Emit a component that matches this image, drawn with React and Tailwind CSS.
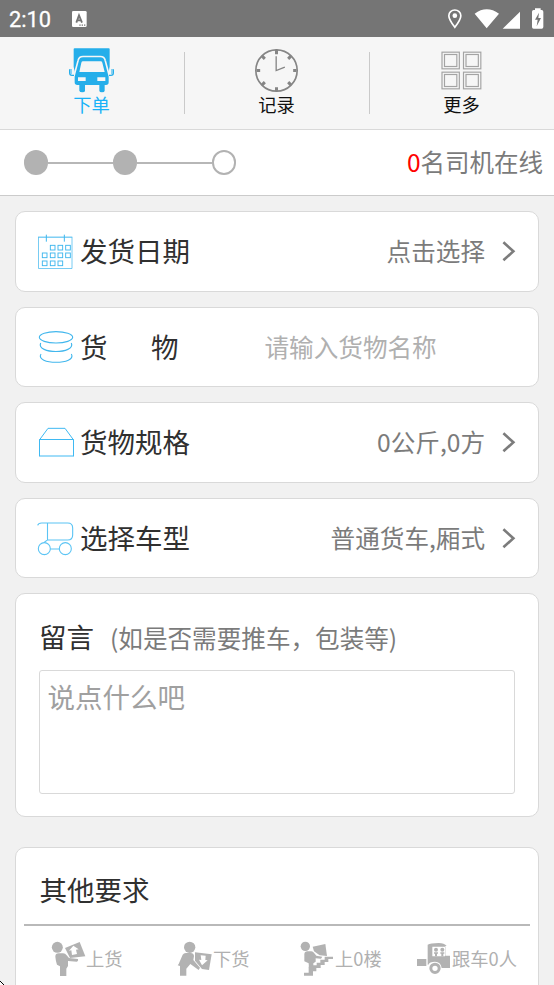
import React from "react";

const TruckIcon = () => (
  <svg className="h-[47px] w-[47px]" viewBox="204 141 141 141">
    <path fill="#25aeea" d="M221 147q0-2 3-2h102q3 0 3 2v53l-4 20H225l-4-20z" />
    <path
      fill="#25aeea"
      stroke="#f6f6f6"
      strokeWidth="10"
      paintOrder="stroke"
      d="M249 172h52q10 0 12 9l13 49v17q0 8-8 8h-4v17q0 5-8 5t-8-5v-17h-43v17q0 5-8 5t-9-5v-17h-6q-8 0-8-8v-17l13-49q2-9 12-9z"
    />
    <path fill="#f6f6f6" d="M249 184q-4 0-5 4l-6 28h76l-7-28q-1-4-5-4zM234 232v11h23v-11zM292 232v11h24v-11z" />
    <path fill="none" stroke="#25aeea" strokeWidth="4" d="M209 208v11q0 7 7 7h6M340 208v11q0 7-7 7h-6" />
    <path stroke="#74cbf2" strokeWidth="5" d="M213 207v15M336 207v15" />
  </svg>
);

const ClockIcon = () => (
  <svg className="h-[47px] w-[47px]" viewBox="-70.5 -70.5 141 141" fill="none" stroke="#858585">
    <circle r="62" strokeWidth="5" />
    <path strokeWidth="9" d="M0-62v13M0 62v-12M-60 0h11M60 0h-10M-43-43l8 8M43-43l-8 8M-43 43l8-8M43 43l-8-8" />
    <path strokeWidth="4" d="M-1-43V0L25-10" />
  </svg>
);

const GridIcon = () => (
  <svg className="h-[47px] w-[47px]" viewBox="204 141 141 141" fill="none" stroke="#a3a3a3" strokeWidth="3.500">
    {[[216, 156.5], [280.5, 156.5], [216, 216.5], [280.5, 216.5]].map(([x, y]) => (
      <g key={`${x}-${y}`}>
        <rect x={x} y={y} width="52" height="50" />
        <rect x={x + 7.5} y={y + 7} width="37" height="36" />
      </g>
    ))}
  </svg>
);

const boxes = [
  [121, 122], [144, 122], [167, 122],
  [97, 145], [121, 145], [144, 145], [167, 145],
  [97, 169], [121, 169], [144, 169],
];

const lineIcon = "h-[38px] w-[38px] shrink-0";

const CalendarIcon = () => (
  <svg className={lineIcon} viewBox="82 82 114 114" fill="none" stroke="#3fb7ee" strokeWidth="3">
    <path strokeOpacity="0.7" d="M86.500 98v93.500h100.500V98" />
    <path d="M85 97.500h103M110 90v21M164 90v21" />
    {boxes.map(([x, y]) => (
      <rect key={`${x}-${y}`} x={x + 1} y={y} width="14" height="14" strokeWidth="2.800" />
    ))}
  </svg>
);

const StackIcon = () => (
  <svg className={lineIcon} viewBox="81 369 114 114" fill="none" stroke="#42b7ed" strokeWidth="3.400">
    <ellipse cx="138" cy="397" rx="50" ry="17" />
    <path d="M92 414c-14 34 106 34 92 0M93 447c-20 33 110 33 91 0" />
  </svg>
);

const BoxIcon = () => (
  <svg className={lineIcon} viewBox="81 84 114 114" fill="none" stroke="#3fb9f2" strokeWidth="3">
    <path d="M89 134l25-34h51l25 34M88 133.500h103M88.500 133v51M190.500 133v51M88 183h103" />
  </svg>
);

const CartIcon = () => (
  <svg className={lineIcon} viewBox="81 371 114 114" fill="none" stroke="#5bc4f4" strokeWidth="3.300">
    <path d="M83 390q2-7 12-7h78q15 0 15 15v21q0 15-15 15h-60q-2 0-11 8M112.500 383v51M121 461h27" />
    <circle cx="103" cy="460" r="18" />
    <circle cx="166" cy="460" r="18" />
  </svg>
);

const Chevron = () => (
  <svg className="h-[22px] w-[14px]" viewBox="0 0 14 22" fill="none" stroke="#7c7c7c" strokeWidth="2.600">
    <path d="M1.400 2.300L11.400 11.300L1.400 20.300" />
  </svg>
);

const LoadIcon = () => (
  <svg className="h-[36px] w-[36px]" viewBox="150 303 108 108" fill="#b2b2b2">
    <circle cx="172" cy="322" r="16.500" />
    <path d="M166 350q0-10 10-10h13q7 0 11 6l7 8 27 3q2 5-3 8l-27-2v15l-5 8v22h-19v-29l-9-5q-4-12-5-24z" />
    <path d="M195 324l44-18 17 43-46 5z" />
    <path fill="#fff" d="M220 317l-13 15 7-1 2 14 15-3-3-13 8-1z" />
  </svg>
);

const UnloadIcon = () => (
  <svg className="h-[36px] w-[36px]" viewBox="531 303 108 108" fill="#b2b2b2">
    <circle cx="569" cy="322" r="17" />
    <path d="M536 372l12-28q3-5 10-5h14q9 0 10 9l-2 12 20 23-4 7-25-18-12 14v21h-19v-29l-7-2z" />
    <path d="M585 337l50 6-8 47-21-3-21-25z" />
    <path fill="#fff" d="M602 346l15 1-1 13 7 1-17 15-9-17 7 1z" />
  </svg>
);

const StairsIcon = () => (
  <svg className="h-[36px] w-[36px]" viewBox="57 93 108 108" fill="#b2b2b2">
    <circle cx="76" cy="109" r="14" />
    <path d="M73 132q1-8 9-8h12q5 0 9 6l6 7 18 3-4 6-16-1v10l-7 5v16h-13l-1-16-13-6z" />
    <path d="M98 110l38-8 5 36-22-2-17-12z" />
    <path d="M72 188h14v-18h10v-4h14v-8h11v-9h13v-9h25v7h-14v9h-11v9h-12v9h-13v10h-10v13H72z" />
  </svg>
);

const RideIcon = () => (
  <svg className="h-[36px] w-[36px]" viewBox="408 93 108 108" fill="#b2b2b2">
    <path d="M411 147h28v21h-28z" />
    <path fillRule="evenodd" d="M443 104q8-5 33-5 17 0 24 9h-4v29h14v37h-25q-3-19-20-19t-20 9h-2zM457 110v29h38v-29z" />
    <circle cx="468" cy="119" r="6" />
    <circle cx="487" cy="119" r="6" />
    <path d="M462 127h12v4h-3v8h-6v-8h-3zM481 127h12v4h-3v8h-6v-8h-3z" />
    <circle cx="465" cy="175" r="12.500" fill="none" stroke="#b2b2b2" strokeWidth="9" />
  </svg>
);

const Tab = ({ icon, label, active }) => (
  <div className="flex flex-1 flex-col items-center pr-[1px] pt-[10px]">
    {icon}
    <span className={`-mt-[2px] text-[18.300px] leading-[24px] ${active ? "text-[#18b2f8]" : "text-[#111]"}`}>{label}</span>
  </div>
);

const Divider = () => <div className="mt-[15px] h-[62px] w-px bg-[#cacaca]" />;

const Row = ({ icon, label, value }) => (
  <div className="flex h-[80.500px] items-center rounded-[10px] border border-[#d9d9d9] bg-white pl-[21px] pr-[22px]">
    {icon}
    <span className="-mt-[2px] ml-[5px] text-[27.500px] leading-[40px] text-[#303030]">{label}</span>
    <span className="-mt-[2px] ml-auto mr-[17px] text-[24.600px] leading-[36px] text-[#7b7b7b]">{value}</span>
    <Chevron />
  </div>
);

export default function App() {
  return (
    <div className="relative flex h-[985px] w-[554px] flex-col overflow-hidden bg-[#f1f1f1] font-['Noto_Sans_CJK_SC',sans-serif]">
      <header className="flex h-[37px] shrink-0 items-center bg-[#757575] font-[Roboto,sans-serif] text-white">
        <span className="ml-[9px] mt-[2px] w-[63px] text-[21.800px] leading-[30px] [-webkit-text-stroke:0.3px_white]">2:10</span>
        <svg className="h-[16px] w-[15px]" viewBox="216 31 45 48">
          <rect x="216" y="31" width="44" height="48" rx="4" fill="#fff" />
          <path d="M229 66l8-22 9 22M232 59h11" fill="none" stroke="#757575" strokeWidth="5.500" />
          <path d="M238 73.500h4M245 73.500h4M252 73.500h4" stroke="#757575" strokeWidth="4" />
        </svg>
        <svg className="ml-auto mr-[9px] h-[22px] w-[98px]" viewBox="231 22 294 66">
          <path fill="none" stroke="#fff" strokeWidth="5" d="M254.500 80q-18-24-18-35a18 17 0 0 1 36 0q0 11-18 35z" />
          <circle cx="254.500" cy="45" r="7" fill="#fff" />
          <path fill="#fff" d="M314 39q36-26 73 0l-37 44zM450 33v51h-52zM486 33q0-5 5-5h4v-5h17v5h3q5 0 5 5v46q0 5-5 5h-24q-5 0-5-5z" />
          <path fill="#757575" d="M507 36l-12 21h8l-3 20 13-25h-8z" />
        </svg>
      </header>

      <nav className="flex h-[93px] shrink-0 border-b border-[#d9d9d9] bg-[#f6f6f6]">
        <Tab icon={<TruckIcon />} label="下单" active />
        <Divider />
        <Tab icon={<ClockIcon />} label="记录" />
        <Divider />
        <Tab icon={<GridIcon />} label="更多" />
      </nav>

      <section className="flex h-[66px] shrink-0 items-center border-b border-[#cbcbcb] bg-white pl-[24px] pr-[11px]">
        <div className="h-[24.500px] w-[24px] rounded-full bg-[#b2b2b2]" />
        <div className="h-[2px] w-[64.500px] bg-[#b7b7b7]" />
        <div className="h-[24.500px] w-[24px] rounded-full bg-[#b2b2b2]" />
        <div className="h-[2px] w-[75.500px] bg-[#b7b7b7]" />
        <div className="h-[24.500px] w-[24px] rounded-full border-2 border-[#b2b2b2]" />
        <p className="-mt-[1px] ml-auto text-[24.500px] leading-[36px] text-[#7b7b7b]">
          <span className="text-[#ff0000]">0</span>名司机在线
        </p>
      </section>

      <main className="flex shrink-0 flex-col gap-[15px] px-[15px] pt-[15px]">
        <Row icon={<CalendarIcon />} label="发货日期" value="点击选择" />
        <div className="flex h-[80.500px] items-center rounded-[10px] border border-[#d9d9d9] bg-white pl-[21px]">
          <StackIcon />
          <span className="-mt-[2px] ml-[5px] flex w-[98.500px] justify-between text-[27.500px] leading-[40px] text-[#303030]">
            <span>货</span>
            <span>物</span>
          </span>
          <span className="-mt-[2px] ml-[86px] text-[24.600px] leading-[36px] text-[#b0b0b0]">请输入货物名称</span>
        </div>
        <Row icon={<BoxIcon />} label="货物规格" value="0公斤,0方" />
        <Row icon={<CartIcon />} label="选择车型" value="普通货车,厢式" />

        <section className="h-[224px] rounded-[10px] border border-[#d9d9d9] bg-white px-[23px] pt-[22px]">
          <div className="flex items-baseline leading-[40px]">
            <h2 className="text-[27.500px] text-[#303030]">留言</h2>
            <span className="ml-[16px] text-[24.600px] text-[#7b7b7b]">(如是否需要推车，包装等)</span>
          </div>
          <div className="mt-[13px] h-[124px] rounded-[3px] border border-[#d9d9d9] px-[7.500px] pt-[5px] text-[27.500px] leading-[40px] text-[#a0a0a0]">
            说点什么吧
          </div>
        </section>

        <section className="mt-[15px] h-[180px] rounded-[10px] border border-[#d9d9d9] bg-white px-[8px]">
          <h2 className="h-[76px] pl-[15.500px] pt-[21px] text-[27.500px] leading-[40px] text-[#303030]">其他要求</h2>
          <div className="h-[2px] bg-[#b9b9b9]" />
          <div className="flex pt-[15px] text-[18.300px] leading-[34px] text-[#b0b0b0]">
            <div className="ml-[26px] flex w-[127px]"><LoadIcon /><span className="whitespace-nowrap">上货</span></div>
            <div className="flex w-[122px]"><UnloadIcon /><span className="whitespace-nowrap">下货</span></div>
            <div className="flex w-[117px]"><StairsIcon /><span className="whitespace-nowrap">上0楼</span></div>
            <div className="flex"><RideIcon /><span className="whitespace-nowrap">跟车0人</span></div>
          </div>
        </section>
      </main>

      <svg className="absolute bottom-0 left-0 h-[5px] w-[5px]" viewBox="0 0 5 5">
        <path fill="#000" d="M0 1h1v1h-1zM1 2h1v1h-1zM2 3h1v1h-1zM3 4h1v1h-1z" />
        <path fill="#fff" d="M0 2h1v1h1v1h1v1h-3z" />
      </svg>
    </div>
  );
}
